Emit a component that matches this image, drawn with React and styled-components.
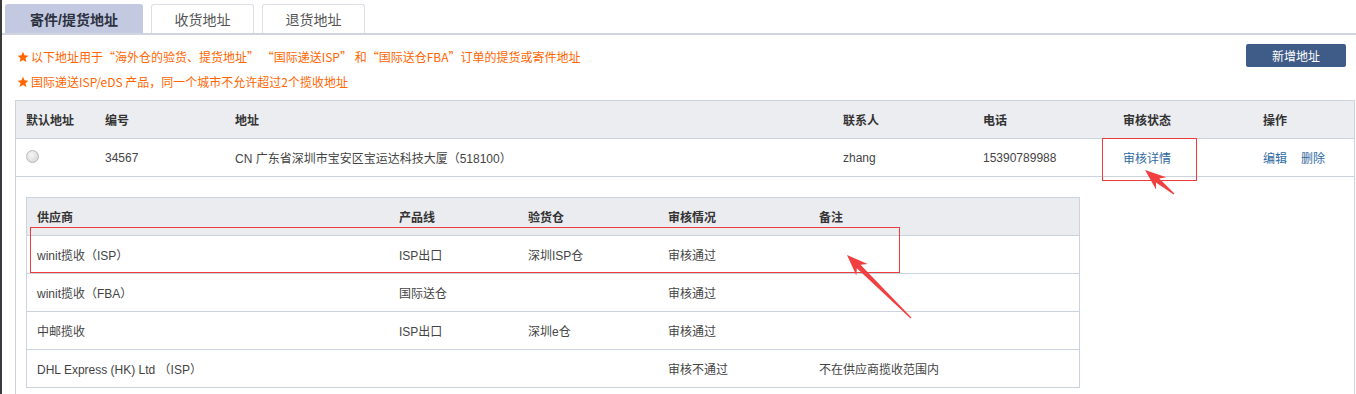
import React from 'react'
import styled, { createGlobalStyle } from 'styled-components'

const GlobalStyle = createGlobalStyle`
  html, body {
    margin: 0;
    padding: 0;
    background: #fff;
    overflow: hidden;
  }
  body {
    font-family: "Liberation Sans", "Noto Sans CJK SC", sans-serif;
    font-size: 12px;
    color: #444;
  }
`

const MAIN_COLS = '79px 130px 608px 140px 140px 140px 1fr'
const SUB_COLS = '362px 129px 140px 151px 1fr'

const addresses = [
  {
    id: '34567',
    address: 'CN 广东省深圳市宝安区宝运达科技大厦（518100）',
    contact: 'zhang',
    phone: '15390789988',
  },
]

const suppliers = [
  { name: 'winit揽收（ISP）', line: 'ISP出口', store: '深圳ISP仓', status: '审核通过', note: '' },
  { name: 'winit揽收（FBA）', line: '国际送仓', store: '', status: '审核通过', note: '' },
  { name: '中邮揽收', line: 'ISP出口', store: '深圳e仓', status: '审核通过', note: '' },
  { name: 'DHL Express (HK) Ltd （ISP）', line: '', store: '', status: '审核不通过', note: '不在供应商揽收范围内' },
]

function arrowPoints(x1, y1, x2, y2) {
  const dx = x2 - x1
  const dy = y2 - y1
  const len = Math.hypot(dx, dy)
  const ux = dx / len
  const uy = dy / len
  const nx = -uy
  const ny = ux
  const L = 21
  const W = 8
  const ws = 2.6
  const wt = 0.6
  const bx = x2 - ux * L * 0.78
  const by = y2 - uy * L * 0.78
  const hx = x2 - ux * L
  const hy = y2 - uy * L
  const pts = [
    [x1 + nx * wt, y1 + ny * wt],
    [bx + nx * ws, by + ny * ws],
    [hx + nx * W, hy + ny * W],
    [x2, y2],
    [hx - nx * W, hy - ny * W],
    [bx - nx * ws, by - ny * ws],
    [x1 - nx * wt, y1 - ny * wt],
  ]
  return pts.map(p => p.join(',')).join(' ')
}

export default function App() {
  return (
    <Page>
      <GlobalStyle />
      <TabBar>
        <Tab active>寄件/提货地址</Tab>
        <Tab>收货地址</Tab>
        <Tab>退货地址</Tab>
      </TabBar>
      <Content>
        <NoticeBar>
          <Notices>
            <Notice lang="zh-CN">
              <Star />
              以下地址用于“海外仓的验货、提货地址” “国际递送ISP” 和“国际送仓FBA”订单的提货或寄件地址
            </Notice>
            <Notice lang="zh-CN">
              <Star />
              国际递送ISP/eDS 产品，同一个城市不允许超过2个揽收地址
            </Notice>
          </Notices>
          <AddButton>新增地址</AddButton>
        </NoticeBar>

        <Table>
          <HeadRow cols={MAIN_COLS}>
            <Cell>默认地址</Cell>
            <Cell>编号</Cell>
            <Cell>地址</Cell>
            <Cell>联系人</Cell>
            <Cell>电话</Cell>
            <Cell>审核状态</Cell>
            <Cell>操作</Cell>
          </HeadRow>
          {addresses.map(a => (
            <React.Fragment key={a.id}>
              <Row cols={MAIN_COLS}>
                <Cell><Radio /></Cell>
                <Cell>{a.id}</Cell>
                <Cell>{a.address}</Cell>
                <Cell>{a.contact}</Cell>
                <Cell>{a.phone}</Cell>
                <Cell><Link>审核详情</Link></Cell>
                <Cell>
                  <Link>编辑</Link>
                  <Link gap>删除</Link>
                </Cell>
              </Row>
              <Detail>
                <SubTable>
                  <SubHeadRow cols={SUB_COLS}>
                    <Cell>供应商</Cell>
                    <Cell>产品线</Cell>
                    <Cell>验货仓</Cell>
                    <Cell>审核情况</Cell>
                    <Cell>备注</Cell>
                  </SubHeadRow>
                  {suppliers.map((s, i) => (
                    <Row key={i} cols={SUB_COLS}>
                      <Cell>{s.name}</Cell>
                      <Cell>{s.line}</Cell>
                      <Cell>{s.store}</Cell>
                      <Cell>{s.status}</Cell>
                      <Cell>{s.note}</Cell>
                    </Row>
                  ))}
                </SubTable>
              </Detail>
            </React.Fragment>
          ))}
        </Table>
      </Content>

      <Marks width="1356" height="394" viewBox="0 0 1356 394">
        <rect x="1102.5" y="138.5" width="94" height="42" fill="none" stroke="#ee3b3b" strokeWidth="1" />
        <polygon points={arrowPoints(1174, 194, 1145, 170)} fill="#f23f3f" />
        <rect x="30.5" y="227.5" width="869" height="45" fill="none" stroke="#ee3b3b" strokeWidth="1" />
        <polygon points={arrowPoints(911, 318, 847, 255)} fill="#f23f3f" />
      </Marks>
    </Page>
  )
}

function Star() {
  return (
    <StarIcon viewBox="0 0 24 24">
      <polygon points="12,1.5 15.1,8.6 22.8,9.3 17,14.4 18.7,22 12,18 5.3,22 7,14.4 1.2,9.3 8.9,8.6" fill="#ff6600" />
    </StarIcon>
  )
}

const Page = styled.div`
  position: relative;
  width: 1356px;
  height: 394px;
  box-sizing: border-box;
  border-left: 2px solid #3a3a3a;
  padding-top: 4px;
`

const TabBar = styled.div`
  display: flex;
  gap: 8px;
  padding-left: 3px;
  border-bottom: 2px solid #d0d4de;
`

const Tab = styled.div`
  box-sizing: border-box;
  width: ${p => (p.active ? '138px' : '103px')};
  height: 29px;
  display: flex;
  align-items: center;
  justify-content: center;
  border: 1px solid ${p => (p.active ? '#c2c9e1' : '#dcdfe6')};
  border-bottom: none;
  border-radius: 3px 3px 0 0;
  background: ${p => (p.active ? '#c2c9e1' : '#fff')};
  color: ${p => (p.active ? '#2c3140' : '#555')};
  font-size: 14px;
  font-weight: ${p => (p.active ? 700 : 400)};
`

const Content = styled.div`
  padding: 0 1px 0 13px;
`

const NoticeBar = styled.div`
  display: flex;
  justify-content: space-between;
  align-items: flex-start;
  padding: 9px 9px 6px 2px;
`

const Notices = styled.div`
  display: flex;
  flex-direction: column;
`

const Notice = styled.div`
  display: flex;
  align-items: center;
  height: 25px;
  color: #ff6600;
  font-family: "Noto Sans CJK SC", "Liberation Sans", sans-serif;
  font-size: 12px;
  white-space: pre;
`

const StarIcon = styled.svg`
  width: 12px;
  height: 12px;
  margin-right: 2px;
  flex: none;
`

const AddButton = styled.button`
  width: 100px;
  height: 23px;
  border: none;
  border-radius: 2px;
  background: #3f5b87;
  color: #fff;
  font-family: inherit;
  font-size: 12px;
  padding: 0;
`

const Table = styled.div`
  border: 1px solid #cbd3df;
  border-bottom: none;
`

const Row = styled.div`
  display: grid;
  grid-template-columns: ${p => p.cols};
  align-items: center;
  height: 37px;
  border-bottom: 1px solid #cbd3df;
  background: #fff;
`

const HeadRow = styled(Row)`
  background: #ecedf1;
  color: #333;
  font-weight: 700;
`

const Cell = styled.div`
  padding-left: 10px;
  white-space: nowrap;
  display: flex;
  align-items: center;
`

const Radio = styled.span`
  width: 11px;
  height: 11px;
  margin-top: -3px;
  border-radius: 50%;
  border: 1px solid #b9b9b9;
  background: radial-gradient(circle at 40% 35%, #f6f6f6 0%, #dcdcdc 70%, #cfcfcf 100%);
`

const Link = styled.span`
  color: #2f6aa3;
  margin-left: ${p => (p.gap ? '14px' : '0')};
`

const Detail = styled.div`
  padding: 20px 10px;
`

const SubTable = styled.div`
  width: 1054px;
  box-sizing: border-box;
  border: 1px solid #cbd3df;
  border-bottom: none;
`

const SubHeadRow = styled(HeadRow)`
  background: #ebecf0;
`

const Marks = styled.svg`
  position: absolute;
  left: -2px;
  top: 0;
  pointer-events: none;
`
